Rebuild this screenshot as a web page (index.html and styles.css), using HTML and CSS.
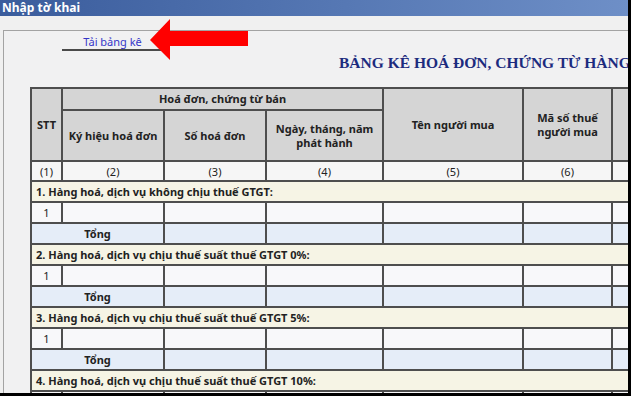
FILE: index.html
```html
<!DOCTYPE html>
<html lang="vi">
<head>
<meta charset="utf-8">
<title>Nhập tờ khai</title>
<link rel="stylesheet" href="styles.css">
</head>
<body>
<div class="window">
  <div class="titlebar">Nhập tờ khai</div>
  <div class="toolbar"></div>
  <div class="panel">
    <div class="tabs"><span class="tab">Tải bảng kê</span></div>
    <h1 class="doc-title">BẢNG KÊ HOÁ ĐƠN, CHỨNG TỪ HÀNG HOÁ, DỊCH VỤ BÁN RA</h1>
    <table class="grid">
      <colgroup>
        <col class="c-stt"><col class="c-kh"><col class="c-so"><col class="c-ngay"><col class="c-ten"><col class="c-mst"><col class="c-more">
      </colgroup>
      <thead>
        <tr class="h1">
          <th rowspan="2">STT</th>
          <th colspan="3">Hoá đơn, chứng từ bán</th>
          <th rowspan="2">Tên người mua</th>
          <th rowspan="2">Mã số thuế<br>người mua</th>
          <th rowspan="2"></th>
        </tr>
        <tr class="h2">
          <th>Ký hiệu hoá đơn</th>
          <th>Số hoá đơn</th>
          <th>Ngày, tháng, năm<br>phát hành</th>
        </tr>
        <tr class="nums">
          <td>(1)</td><td>(2)</td><td>(3)</td><td>(4)</td><td>(5)</td><td>(6)</td><td></td>
        </tr>
      </thead>
      <tbody>
        <tr class="sec"><td colspan="7">1. Hàng hoá, dịch vụ không chịu thuế GTGT:</td></tr>
        <tr class="row"><td class="stt">1</td><td></td><td></td><td></td><td></td><td></td><td></td></tr>
        <tr class="sum"><td colspan="2">Tổng</td><td></td><td></td><td></td><td></td><td></td></tr>
        <tr class="sec"><td colspan="7">2. Hàng hoá, dịch vụ chịu thuế suất thuế GTGT 0%:</td></tr>
        <tr class="row"><td class="stt">1</td><td></td><td></td><td></td><td></td><td></td><td></td></tr>
        <tr class="sum"><td colspan="2">Tổng</td><td></td><td></td><td></td><td></td><td></td></tr>
        <tr class="sec"><td colspan="7">3. Hàng hoá, dịch vụ chịu thuế suất thuế GTGT 5%:</td></tr>
        <tr class="row"><td class="stt">1</td><td></td><td></td><td></td><td></td><td></td><td></td></tr>
        <tr class="sum"><td colspan="2">Tổng</td><td></td><td></td><td></td><td></td><td></td></tr>
        <tr class="sec"><td colspan="7">4. Hàng hoá, dịch vụ chịu thuế suất thuế GTGT 10%:</td></tr>
        <tr class="row"><td class="stt">1</td><td></td><td></td><td></td><td></td><td></td><td></td></tr>
      </tbody>
    </table>
  </div>
  <svg class="arrow" width="98" height="41" viewBox="0 0 98 41" aria-hidden="true">
    <polygon points="0,21 20,0 20,12 98,12 98,27 20,27 20,41" fill="#ff0000"/>
  </svg>
</div>
</body>
</html>
```

FILE: styles.css
```css
html, body {
  margin: 0;
  padding: 0;
  background: #000;
}

.window {
  position: relative;
  width: 631px;
  height: 396px;
  box-sizing: border-box;
  border-right: 3px solid #000;
  border-bottom: 3px solid #000;
  background: #f0f0f0;
  overflow: hidden;
  font-family: "Noto Sans", "DejaVu Sans", sans-serif;
}

.titlebar {
  height: 16px;
  line-height: 15px;
  padding-left: 2px;
  background: linear-gradient(to right, #3a5c9c 0%, #5678b4 55%, #6e8fc7 100%);
  color: #fff;
  font-size: 12px;
  font-weight: bold;
  white-space: nowrap;
}

.toolbar {
  height: 14px;
  background: #f0f0f0;
}

.panel {
  margin-left: 3px;
  border-top: 1px solid #a3a3a3;
  border-left: 1px solid #a3a3a3;
  background: #f1f1f2;
  padding-left: 26px;
  height: 400px;
}

.tabs {
  padding-top: 4px;
}

.tab {
  display: block;
  margin-left: 32px;
  width: 101px;
  height: 14px;
  line-height: 14px;
  border-bottom: 2px solid #4a4a4a;
  text-align: center;
  color: #3535c8;
  font-size: 11px;
}

.doc-title {
  margin: 3px 0 0 0;
  padding-left: 309px;
  height: 17px;
  line-height: 17px;
  font-family: "Liberation Serif", "Times New Roman", serif;
  font-size: 15.5px;
  font-weight: bold;
  color: #1c2b7e;
  white-space: nowrap;
}

.grid {
  margin-top: 16px;
  table-layout: fixed;
  width: 681px;
  border-collapse: collapse;
  font-size: 11px;
  color: #222;
}

.c-stt { width: 31px; }
.c-kh { width: 102px; }
.c-so { width: 102px; }
.c-ngay { width: 117px; }
.c-ten { width: 140px; }
.c-mst { width: 89px; }
.c-more { width: 100px; }

.grid th,
.grid td {
  border: 2px solid #4e4e4e;
  padding: 0;
  text-align: center;
  vertical-align: middle;
  line-height: 13px;
}

.grid th {
  background: #d5d5d5;
  font-weight: bold;
  line-height: 14px;
}

.h1 { height: 22px; }
.h2 { height: 51px; }

.nums { height: 20px; }
.nums td { background: #f6f6f6; }

.sec { height: 21px; }
.sec td {
  background: #f6f4e5;
  text-align: left;
  padding-left: 4px;
  font-weight: bold;
}

.row { height: 21px; }
.row td { background: #f8f8fa; }

.sum { height: 21px; }
.sum td { background: #e5edf8; }
.sum td:first-child { font-weight: bold; }

.arrow {
  position: absolute;
  left: 150px;
  top: 19px;
}
```
